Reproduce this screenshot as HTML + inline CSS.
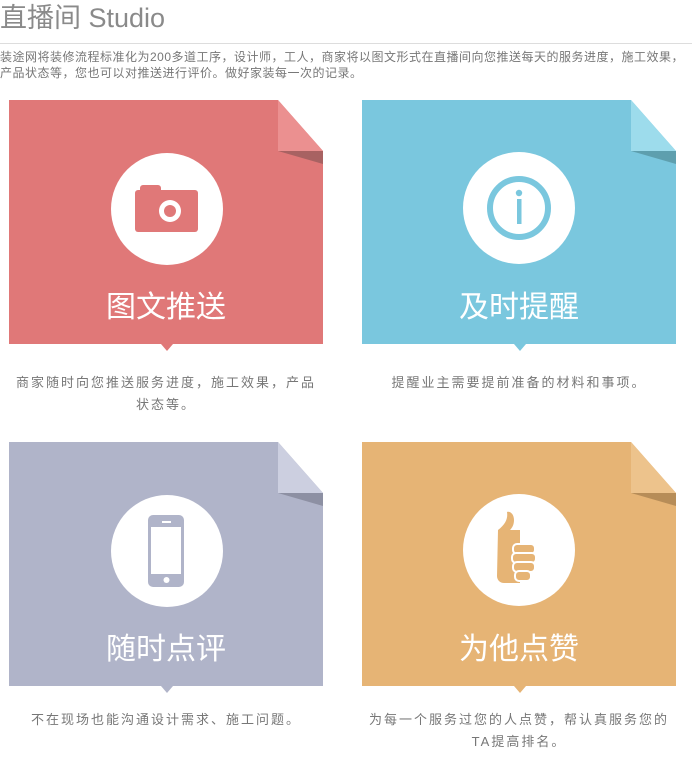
<!DOCTYPE html>
<html><head><meta charset="utf-8"><style>
body{margin:0;width:692px;height:782px;background:#fff;font-family:"Liberation Sans","Noto Sans CJK SC",sans-serif;position:relative;overflow:hidden}
.h{position:absolute;left:0;top:1px;font-size:27px;color:#8a8a8a;line-height:34px}
.line{position:absolute;left:0;top:43px;width:692px;height:1px;background:#ddd}
.d{position:absolute;left:0;top:49px;width:692px;font-size:12px;color:#777;line-height:16px;white-space:nowrap;letter-spacing:0.5px}
.c{position:absolute;width:314px;height:252px}
.t{position:absolute;left:0;width:314px;text-align:center;top:190px;font-size:30px;color:#fff;line-height:36px}
.cap{position:absolute;width:314px;text-align:center;font-size:13px;letter-spacing:2px;color:#777;line-height:22px}
</style></head><body>
<div class="h">直播间 Studio</div>
<div class="line"></div>
<div class="d">装途网将装修流程标准化为200多道工序，设计师，工人，商家将以图文形式在直播间向您推送每天的服务进度，施工效果，<br>产品状态等，您也可以对推送进行评价。做好家装每一次的记录。</div>

<div class="c" style="left:9px;top:100px">
<svg width="314" height="252"><path d="M0 0H269L314 51V244H164L158 251L152 244H0Z" fill="#e07878"/><path d="M269 0V51H314Z" fill="#eb9090"/><path d="M269 51H314V64Z" fill="#a86262"/>
<circle cx="158" cy="109" r="56" fill="#fff"/>
<rect x="126" y="90" width="63" height="42" rx="3" fill="#e07878"/><rect x="131" y="85" width="21" height="8" rx="3" fill="#e07878"/>
<circle cx="161" cy="111" r="11" fill="#fff"/><circle cx="161" cy="111" r="6" fill="#e07878"/></svg>
<div class="t">图文推送</div></div>

<div class="c" style="left:362px;top:100px">
<svg width="314" height="252"><path d="M0 0H269L314 51V244H164L158 251L152 244H0Z" fill="#7ac7de"/><path d="M269 0V51H314Z" fill="#9ddcec"/><path d="M269 51H314V64Z" fill="#5e9fae"/>
<circle cx="157" cy="108" r="56" fill="#fff"/>
<circle cx="157" cy="108" r="29" fill="none" stroke="#7ac7de" stroke-width="6"/>
<circle cx="157" cy="93" r="3.2" fill="#7ac7de"/><rect x="155" y="99" width="4.5" height="25" fill="#7ac7de"/></svg>
<div class="t">及时提醒</div></div>

<div class="c" style="left:9px;top:442px">
<svg width="314" height="252"><path d="M0 0H269L314 51V244H164L158 251L152 244H0Z" fill="#b0b4c9"/><path d="M269 0V51H314Z" fill="#cccfe0"/><path d="M269 51H314V64Z" fill="#8d90a3"/>
<circle cx="158" cy="109" r="56" fill="#fff"/>
<rect x="139" y="73" width="36" height="72" rx="5" fill="#b0b4c9"/><rect x="142" y="85" width="30" height="47" fill="#fff"/>
<rect x="153" y="79" width="9" height="2" fill="#fff"/><circle cx="157.5" cy="138" r="3" fill="#fff"/></svg>
<div class="t">随时点评</div></div>

<div class="c" style="left:362px;top:442px">
<svg width="314" height="252"><path d="M0 0H269L314 51V244H164L158 251L152 244H0Z" fill="#e6b475"/><path d="M269 0V51H314Z" fill="#edc38c"/><path d="M269 51H314V64Z" fill="#b78d58"/>
<circle cx="157" cy="108" r="56" fill="#fff"/>
<path d="M136 88C144 82 146 76 145 70C148 69 152 72 152 78C152 83 150 86 148 88H158V141H142C138 141 135 138 135 134Z" fill="#e6b475"/>
<g fill="#e6b475" stroke="#fff" stroke-width="2"><rect x="151" y="102" width="22" height="10" rx="4"/><rect x="150" y="111" width="24" height="10" rx="4"/><rect x="151" y="120" width="22" height="10" rx="4"/><rect x="153" y="129" width="16" height="10" rx="4"/></g></svg>
<div class="t">为他点赞</div></div>

<div class="cap" style="left:9px;top:372px">商家随时向您推送服务进度，施工效果，产品<br>状态等。</div>
<div class="cap" style="left:362px;top:372px">提醒业主需要提前准备的材料和事项。</div>
<div class="cap" style="left:9px;top:709px">不在现场也能沟通设计需求、施工问题。</div>
<div class="cap" style="left:362px;top:709px">为每一个服务过您的人点赞，帮认真服务您的<br>TA提高排名。</div>
</body></html>
